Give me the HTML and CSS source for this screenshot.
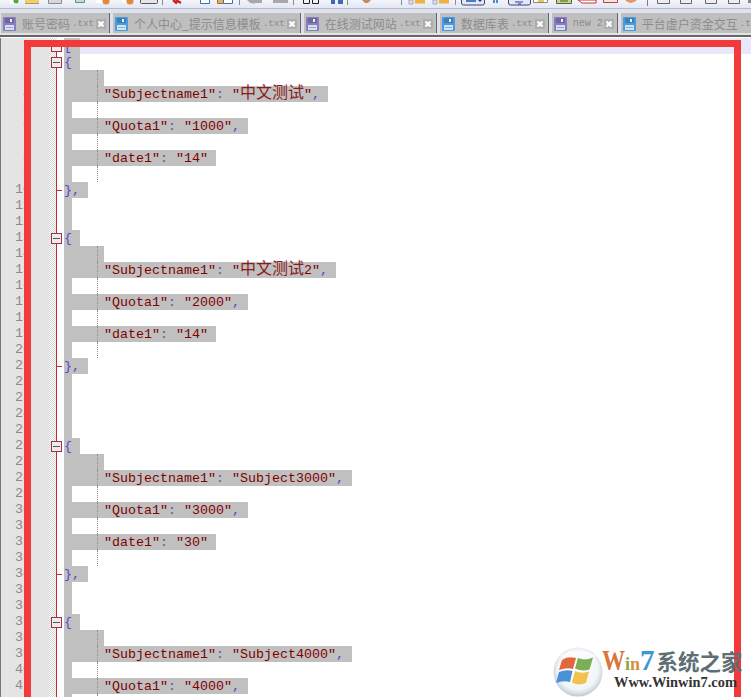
FILE: index.html
```html
<!DOCTYPE html>
<html lang="zh">
<head>
<meta charset="utf-8">
<title>Notepad++</title>
<link rel="stylesheet" href="styles.css">
</head>
<body>
<svg class="defs" width="0" height="0" aria-hidden="true">
  <symbol id="floppy" viewBox="0 0 13 14">
    <rect x="0" y="0" width="13" height="14" rx="1" fill="currentColor"/>
    <rect x="2" y="1" width="9" height="5" fill="#000" opacity=".18"/>
    <rect x="7" y="2" width="2" height="3" fill="#e8eef8"/>
    <rect x="2" y="8" width="9" height="5" fill="#cfe4ea"/>
    <rect x="3" y="10" width="7" height="1" fill="currentColor" opacity=".6"/>
  </symbol>
  <symbol id="close" viewBox="0 0 10 10">
    <rect width="10" height="10" fill="#adadad"/>
    <path d="M2.5 2.5l5 5M7.5 2.5l-5 5" stroke="#fff" stroke-width="2.2"/>
  </symbol>
</svg>

<div class="toolbar">
  <svg class="strip" width="751" height="9" viewBox="0 0 751 9">
    <rect x="10" y="0" width="6" height="4" fill="#fff"/><circle cx="16" cy="1" r="2.5" fill="#5aa83c"/>
    <rect x="25" y="0" width="14" height="3" fill="#f3cf6c"/><rect x="25" y="3" width="14" height="1" fill="#a89a70"/>
    <path d="M48.5 0v3.5h13V0" fill="#d8d8d8" stroke="#8c8c8c"/>
    <path d="M75.5 0v2.5h9V0" fill="#c8dcd4" stroke="#5f8f86"/>
    <rect x="96" y="0" width="12" height="3" fill="#fff"/><circle cx="106" cy="1" r="3.5" fill="#e08a38"/>
    <rect x="122" y="0" width="10" height="3" fill="#fff"/><circle cx="130" cy="1" r="3.5" fill="#e08a38"/>
    <path d="M140.5 0v2.5q0 1 1 1h15q1 0 1-1V0" fill="#e6e6e6" stroke="#555"/>
    <rect x="162" y="0" width="1" height="5" fill="#8a8a9a"/>
    <path d="M173 0l4 3.5M176 0l5 3" stroke="#c8282c" stroke-width="2.4"/>
    <path d="M200.500 0v3.500h9V0" fill="#fff" stroke="#3a70b0"/>
    <path d="M217.500 0v3.500h6V0" fill="#e8b060" stroke="#987038"/><path d="M223.500 0v3.500h9V0" fill="#fff" stroke="#3a70b0"/>
    <rect x="239" y="0" width="1" height="5" fill="#8a8a9a"/>
    <path d="M247 0q4 5 9 3h6V0z" fill="#a8a8a8"/>
    <path d="M273 0h15v3h-15z" fill="#a8a8a8"/>
    <rect x="293" y="0" width="1" height="5" fill="#8a8a9a"/>
    <path d="M303.500 0v3.500h6V0M312.500 0v3.500h6V0" fill="none" stroke="#222"/>
    <path d="M331 0h4v4h-4zM338 0h5v4h-5z" fill="#3a6cb4"/>
    <rect x="347" y="0" width="1" height="5" fill="#8a8a9a"/>
    <path d="M362 0l3 3h3l3-3z" fill="#c88a58"/>
    <rect x="401" y="0" width="1" height="5" fill="#8a8a9a"/>
    <path d="M409 0h4v4h-4z" fill="#dfe3f0" stroke="#a8a8b8"/><rect x="415" y="0" width="10" height="3.500" fill="#efb040"/>
    <path d="M433 0h4v4h-4z" fill="#dfe3f0" stroke="#a8a8b8"/><rect x="439" y="0" width="10" height="3.500" fill="#efb040"/>
    <rect x="455" y="0" width="1" height="5" fill="#8a8a9a"/>
    <path d="M461.500 0v3q0 2 2 2h19q2 0 2-2V0" fill="#e4e8f8" stroke="#3c4668"/><path d="M466 1h10" stroke="#4a7ac8" stroke-width="2"/><path d="M478 0l2 2 2-2z" fill="#2c3a70"/>
    <rect x="493" y="0" width="2" height="3" fill="#4a88d8"/><rect x="496" y="0" width="2" height="3" fill="#4a88d8"/>
    <path d="M508.500 0v3q0 2 2 2h18q2 0 2-2V0" fill="#e4e8f8" stroke="#3c4668"/><path d="M515 2h8M518 4h3" stroke="#2838a0"/>
    <path d="M533.500 0v2.500h14V0" fill="#fff" stroke="#8a8a70"/><rect x="538" y="0" width="6" height="2" fill="#e8c460"/>
    <path d="M556.500 0v3.500h15V0" fill="#d8c890" stroke="#4a6a40"/><rect x="560" y="0" width="8" height="2" fill="#7aa050"/>
    <path d="M578 0l4 3h14V0z" fill="#fff" stroke="#c83030"/>
    <path d="M603.500 0v2.500h14V0" fill="#f0e4e4" stroke="#c04040"/>
    <path d="M625 0q6 6 12 0z" fill="#e09868"/>
    <rect x="647" y="0" width="1" height="6" fill="#7a7a8a"/>
    <path d="M657.500 0v3.500h12V0M680.500 0v3.500h11V0M705.500 0v3.500h11V0M728.500 0v3.500h11V0" fill="#eceef4" stroke="#666"/>
    <rect x="748" y="0" width="3" height="3" fill="#888"/>
  </svg>
</div>

<div class="tabs">
  <div class="tab"><svg class="floppy purple"><use href="#floppy"/></svg><span class="label">账号密码</span><span class="ext">.txt</span><svg class="close"><use href="#close"/></svg></div>
  <div class="tab"><svg class="floppy blue"><use href="#floppy"/></svg><span class="label">个人中心_提示信息模板</span><span class="ext">.txt</span><svg class="close"><use href="#close"/></svg></div>
  <div class="tab"><svg class="floppy purple"><use href="#floppy"/></svg><span class="label">在线测试网站</span><span class="ext">.txt</span><svg class="close"><use href="#close"/></svg></div>
  <div class="tab"><svg class="floppy blue"><use href="#floppy"/></svg><span class="label">数据库表</span><span class="ext">.txt</span><svg class="close"><use href="#close"/></svg></div>
  <div class="tab"><svg class="floppy purple"><use href="#floppy"/></svg><span class="label mono">new 2</span><svg class="close"><use href="#close"/></svg></div>
  <div class="tab"><svg class="floppy blue"><use href="#floppy"/></svg><span class="label">平台虚户资金交互</span><span class="ext">.t</span></div>
</div>
<div class="rule"></div>

<div class="editor">
  <div class="row active first"><span class="num">1</span><span class="mar"></span><span class="fold"><i class="box"></i></span><span class="text"><span class="sel"><b class="br">[</b></span></span></div>
  <div class="row"><span class="num">2</span><span class="mar"></span><span class="fold"><i class="box"></i></span><span class="text"><span class="sel"><b class="br">{</b></span></span></div>
  <div class="row g"><span class="num">3</span><span class="mar"></span><span class="fold"></span><span class="text"><span class="sel flat">     </span></span></div>
  <div class="row g"><span class="num">4</span><span class="mar"></span><span class="fold"></span><span class="text"><span class="sel">     <b>"Subjectname1"</b><b class="op">:</b> <b>"<span class="cjk">中文测试</span>"</b><b class="br">,</b></span></span></div>
  <div class="row g"><span class="num">5</span><span class="mar"></span><span class="fold"></span><span class="text"><span class="sel"></span></span></div>
  <div class="row g"><span class="num">6</span><span class="mar"></span><span class="fold"></span><span class="text"><span class="sel">     <b>"Quota1"</b><b class="op">:</b> <b>"1000"</b><b class="br">,</b></span></span></div>
  <div class="row g"><span class="num">7</span><span class="mar"></span><span class="fold"></span><span class="text"><span class="sel"></span></span></div>
  <div class="row g"><span class="num">8</span><span class="mar"></span><span class="fold"></span><span class="text"><span class="sel">     <b>"date1"</b><b class="op">:</b> <b>"14"</b></span></span></div>
  <div class="row g"><span class="num">9</span><span class="mar"></span><span class="fold"></span><span class="text"><span class="sel"></span></span></div>
  <div class="row"><span class="num">10</span><span class="mar"></span><span class="fold"><i class="tick"></i></span><span class="text"><span class="sel"><b class="br">},</b></span></span></div>
  <div class="row"><span class="num">11</span><span class="mar"></span><span class="fold"></span><span class="text"><span class="sel"></span></span></div>
  <div class="row"><span class="num">12</span><span class="mar"></span><span class="fold"></span><span class="text"><span class="sel"></span></span></div>
  <div class="row"><span class="num">13</span><span class="mar"></span><span class="fold"><i class="box"></i></span><span class="text"><span class="sel"><b class="br">{</b></span></span></div>
  <div class="row g"><span class="num">14</span><span class="mar"></span><span class="fold"></span><span class="text"><span class="sel flat">     </span></span></div>
  <div class="row g"><span class="num">15</span><span class="mar"></span><span class="fold"></span><span class="text"><span class="sel">     <b>"Subjectname1"</b><b class="op">:</b> <b>"<span class="cjk">中文测试</span>2"</b><b class="br">,</b></span></span></div>
  <div class="row g"><span class="num">16</span><span class="mar"></span><span class="fold"></span><span class="text"><span class="sel"></span></span></div>
  <div class="row g"><span class="num">17</span><span class="mar"></span><span class="fold"></span><span class="text"><span class="sel">     <b>"Quota1"</b><b class="op">:</b> <b>"2000"</b><b class="br">,</b></span></span></div>
  <div class="row g"><span class="num">18</span><span class="mar"></span><span class="fold"></span><span class="text"><span class="sel"></span></span></div>
  <div class="row g"><span class="num">19</span><span class="mar"></span><span class="fold"></span><span class="text"><span class="sel">     <b>"date1"</b><b class="op">:</b> <b>"14"</b></span></span></div>
  <div class="row g"><span class="num">20</span><span class="mar"></span><span class="fold"></span><span class="text"><span class="sel"></span></span></div>
  <div class="row"><span class="num">21</span><span class="mar"></span><span class="fold"><i class="tick"></i></span><span class="text"><span class="sel"><b class="br">},</b></span></span></div>
  <div class="row"><span class="num">22</span><span class="mar"></span><span class="fold"></span><span class="text"><span class="sel"></span></span></div>
  <div class="row"><span class="num">23</span><span class="mar"></span><span class="fold"></span><span class="text"><span class="sel"></span></span></div>
  <div class="row"><span class="num">24</span><span class="mar"></span><span class="fold"></span><span class="text"><span class="sel"></span></span></div>
  <div class="row"><span class="num">25</span><span class="mar"></span><span class="fold"></span><span class="text"><span class="sel"></span></span></div>
  <div class="row"><span class="num">26</span><span class="mar"></span><span class="fold"><i class="box"></i></span><span class="text"><span class="sel"><b class="br">{</b></span></span></div>
  <div class="row g"><span class="num">27</span><span class="mar"></span><span class="fold"></span><span class="text"><span class="sel flat">     </span></span></div>
  <div class="row g"><span class="num">28</span><span class="mar"></span><span class="fold"></span><span class="text"><span class="sel">     <b>"Subjectname1"</b><b class="op">:</b> <b>"Subject3000"</b><b class="br">,</b></span></span></div>
  <div class="row g"><span class="num">29</span><span class="mar"></span><span class="fold"></span><span class="text"><span class="sel"></span></span></div>
  <div class="row g"><span class="num">30</span><span class="mar"></span><span class="fold"></span><span class="text"><span class="sel">     <b>"Quota1"</b><b class="op">:</b> <b>"3000"</b><b class="br">,</b></span></span></div>
  <div class="row g"><span class="num">31</span><span class="mar"></span><span class="fold"></span><span class="text"><span class="sel"></span></span></div>
  <div class="row g"><span class="num">32</span><span class="mar"></span><span class="fold"></span><span class="text"><span class="sel">     <b>"date1"</b><b class="op">:</b> <b>"30"</b></span></span></div>
  <div class="row g"><span class="num">33</span><span class="mar"></span><span class="fold"></span><span class="text"><span class="sel"></span></span></div>
  <div class="row"><span class="num">34</span><span class="mar"></span><span class="fold"><i class="tick"></i></span><span class="text"><span class="sel"><b class="br">},</b></span></span></div>
  <div class="row"><span class="num">35</span><span class="mar"></span><span class="fold"></span><span class="text"><span class="sel"></span></span></div>
  <div class="row"><span class="num">36</span><span class="mar"></span><span class="fold"></span><span class="text"><span class="sel"></span></span></div>
  <div class="row"><span class="num">37</span><span class="mar"></span><span class="fold"><i class="box"></i></span><span class="text"><span class="sel"><b class="br">{</b></span></span></div>
  <div class="row g"><span class="num">38</span><span class="mar"></span><span class="fold"></span><span class="text"><span class="sel flat">     </span></span></div>
  <div class="row g"><span class="num">39</span><span class="mar"></span><span class="fold"></span><span class="text"><span class="sel">     <b>"Subjectname1"</b><b class="op">:</b> <b>"Subject4000"</b><b class="br">,</b></span></span></div>
  <div class="row g"><span class="num">40</span><span class="mar"></span><span class="fold"></span><span class="text"><span class="sel"></span></span></div>
  <div class="row g"><span class="num">41</span><span class="mar"></span><span class="fold"></span><span class="text"><span class="sel">     <b>"Quota1"</b><b class="op">:</b> <b>"4000"</b><b class="br">,</b></span></span></div>
  <div class="row g"><span class="num"></span><span class="mar"></span><span class="fold"></span><span class="text"><span class="sel"></span></span></div>
</div>

<div class="frame"></div>

<div class="logo">
  <svg class="orb" width="50" height="50" viewBox="0 0 50 50">
    <defs>
      <radialGradient id="glass" cx="50%" cy="45%" r="55%">
        <stop offset="0" stop-color="#fff"/><stop offset=".75" stop-color="#f2f5f8"/><stop offset="1" stop-color="#bfcad6"/>
      </radialGradient>
    </defs>
    <circle cx="25" cy="25" r="24.500" fill="url(#glass)"/>
    <path d="M9 13q7-5 14-2l-3 11q-6-2-14 1z" fill="#e2673a"/>
    <path d="M25 11q7 3 15-.5l-3.500 12q-7 2.500-14.500-1z" fill="#7cae55"/>
    <path d="M6 25q7-3 13.500-1L17 35q-7-2-14 1z" fill="#4a92d8"/>
    <path d="M22 24q7 3 14 .5L33 36q-7 3-14-.5z" fill="#f2c24e"/>
    <path d="M6 9q19-10 38 0q-19 4-38 0z" fill="#fff" opacity=".55"/>
  </svg>
  <div class="brand">
    <div class="brand-top"><span class="b-w">W</span><span class="b-i">i</span><span class="b-n">n</span><span class="b-7">7</span><span class="b-cn">系统之家</span></div>
    <div class="brand-url">Www.Winwin7.com</div>
  </div>
</div>
</body>
</html>
```
FILE: styles.css
```css
* { box-sizing: border-box; }
html, body { margin: 0; height: 697px; overflow: hidden; background: #fff; }
body { position: relative; font-family: "Liberation Mono", monospace; }
.defs { position: absolute; }

.toolbar { height: 9px; background: linear-gradient(#f2f4fa, #e3e7f3); border-bottom: 1px solid #b4bace; }
.strip { display: block; }

.tabs { display: flex; height: 24px; padding: 4px 0 0 1px; background: #dfe2ec; white-space: nowrap; overflow: hidden; }
.tab { flex: none; display: flex; align-items: center; height: 20px; padding: 2px 3px 0 2px; margin-right: 3px; background: #bfbfbf; border-right: 1px solid #666; color: #8c8c8c; font: 12px/18px "Noto Sans CJK SC", sans-serif; }
.floppy { width: 13px; height: 14px; margin-right: 6px; flex: none; }
.purple { color: #8a7cc0; }
.blue { color: #4a9ae2; }
.label { display: block; }
.label.mono { font: 10px/18px "Liberation Mono", monospace; margin-right: 1px; }
.ext { width: 22px; margin: 0 2px; font: 9.5px/18px "Liberation Mono", monospace; letter-spacing: -.2px; }
.close { width: 10px; height: 10px; flex: none; }
.rule { height: 4px; background: #e2e2e2; border-bottom: 2px solid #666; }

.editor { height: 660px; padding-top: 1px; overflow: hidden; background: #fff; }
.row { display: flex; height: 16px; }
.num { width: 31px; background: #e4e4e4; border-left: 1px solid #777; color: #8a8a8a; font-size: 13.33px; line-height: 16px; text-align: right; }
.mar { width: 18px; background: #e4e4e4; }
.fold { position: relative; width: 15px; background: linear-gradient(90deg, transparent 8px, #fff 8px), repeating-conic-gradient(#d4d4d4 0 25%, #fff 0 50%) 0 0 / 2px 2px; }
.fold::before { content: ""; position: absolute; left: 7px; top: 0; bottom: 0; width: 1px; background: #cc2a2a; }
.first .fold::before { top: 8px; }
.box { position: absolute; left: 2px; top: 3px; width: 11px; height: 11px; background: #ececec; border: 1px solid #a03040; }
.box::after { content: ""; position: absolute; left: 1px; right: 1px; top: 4px; height: 1px; background: #555; }
.tick { position: absolute; left: 7px; top: 8px; width: 6px; height: 1px; background: #cc2a2a; }
.text { position: relative; flex: 1; font-size: 13.33px; line-height: 16px; white-space: pre; color: #800000; }
.active .text { background: #e8e8fa; }
.g .text::after { content: ""; position: absolute; left: 33px; top: 0; bottom: 0; border-left: 1px dotted #8f8f8f; }
.sel { display: inline-block; height: 16px; padding-right: 8px; background: #c0c0c0; line-height: 18px; vertical-align: top; }
.sel.flat { padding-right: 0; }
.sel b { font-weight: 400; }
.br { color: #5f3fd0; }
.op { color: #6a5a9a; }
.cjk { font: 16px/0 "Noto Sans CJK SC", sans-serif; color: #8a1c1c; }

.frame { position: absolute; left: 24px; top: 40px; right: 10px; bottom: 0; border: 7px solid #f23a3a; border-bottom: 0; }

.logo { position: absolute; left: 553px; top: 647px; display: flex; }
.orb { flex: none; }
.brand { width: 146px; margin-left: -1px; }
.brand-top { display: flex; align-items: baseline; height: 26px; margin-bottom: 2px; font: 700 27px/26px "Liberation Serif", serif; white-space: nowrap; }
.b-w { display: inline-block; color: #d9773a; font-size: 23px; transform: scaleY(1.3); transform-origin: 50% 80%; }
.b-i { color: #7fa83f; font-size: 18px; }
.b-n { color: #d98f3a; font-size: 18px; }
.b-7 { color: #3a9ad2; font-size: 29px; margin-right: 2px; }
.b-cn { color: #5d6e74; font: 700 21.500px/20px "Noto Sans CJK SC", sans-serif; }
.brand-url { margin-left: 12px; color: #333; font: 700 14.400px/14px "Liberation Serif", serif; white-space: nowrap; }
```
